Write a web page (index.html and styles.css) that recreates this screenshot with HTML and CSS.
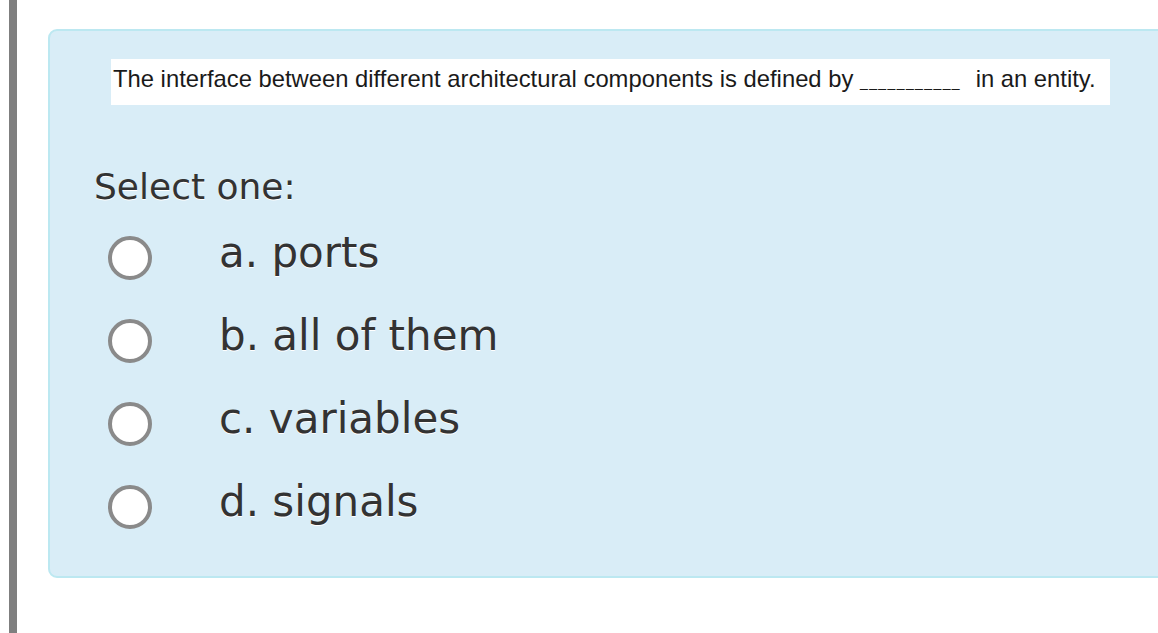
FILE: index.html
```html
<!DOCTYPE html>
<html>
<head>
<meta charset="utf-8">
<link rel="stylesheet" href="styles.css">
</head>
<body>
<div class="page">
  <div class="sidebar"></div>
  <div class="card">
    <div class="qtext">The interface between different architectural components is defined by <span class="blank">___________</span> in an entity.</div>
    <div class="prompt">Select one:</div>
    <div class="answers">
      <label class="opt"><span class="radio"></span><span class="label">a. ports</span></label>
      <label class="opt"><span class="radio"></span><span class="label">b. all of them</span></label>
      <label class="opt"><span class="radio"></span><span class="label">c. variables</span></label>
      <label class="opt"><span class="radio"></span><span class="label">d. signals</span></label>
    </div>
  </div>
</div>
</body>
</html>
```
FILE: styles.css
```css
html, body {
  margin: 0;
  padding: 0;
  background: #ffffff;
  overflow: hidden;
  width: 1158px;
  height: 633px;
}
.page {
  display: flex;
  align-items: flex-start;
  height: 633px;
  overflow: hidden;
}
.sidebar {
  width: 8px;
  height: 633px;
  margin-left: 9px;
  background: #7f7f7f;
  flex: none;
}
.card {
  flex: none;
  margin-left: 31px;
  margin-top: 29px;
  width: 1200px;
  height: 545px;
  background: #d9edf7;
  border: 2px solid #bce8f1;
  border-radius: 9px;
  box-sizing: content-box;
  display: flex;
  flex-direction: column;
}
.qtext {
  margin-left: 61px;
  margin-top: 28px;
  width: 997px;
  height: 46px;
  padding-left: 2px;
  background: #ffffff;
  font-family: "Liberation Sans", Arial, sans-serif;
  font-size: 23.8px;
  letter-spacing: 0;
  line-height: 40px;
  color: #1a1a1a;
  white-space: nowrap;
}
.blank {
  font-size: 14px;
  letter-spacing: 1.4px;
  margin-right: 8px;
}
.prompt {
  margin-left: 44px;
  margin-top: 60px;
  font-family: "DejaVu Sans", Verdana, sans-serif;
  font-size: 36px;
  line-height: 44px;
  color: #333333;
  text-shadow: 0 1px 0 #ffffff;
}
.answers {
  display: flex;
  flex-direction: column;
  margin-top: 27px;
  gap: 39px;
}
.opt {
  display: flex;
  align-items: center;
  height: 44px;
}
.radio {
  flex: none;
  width: 36px;
  height: 36px;
  margin-left: 58px;
  border: 4px solid #8a8a8a;
  border-radius: 50%;
  background: #ffffff;
}
.label {
  margin-left: 67px;
  font-family: "DejaVu Sans", Verdana, sans-serif;
  font-size: 42px;
  line-height: 44px;
  color: #333333;
  text-shadow: 0 1px 0 #ffffff;
  position: relative;
  top: -5px;
}
```
